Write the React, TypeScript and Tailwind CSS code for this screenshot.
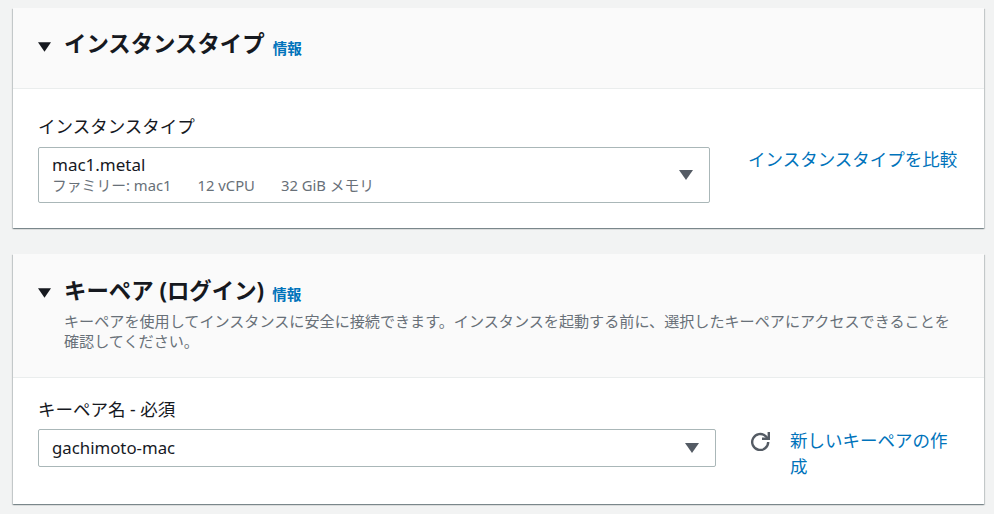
const font = "font-['Noto_Sans','Noto_Sans_CJK_JP',sans-serif]";

function Caret({ className }: { className: string }) {
  return (
    <svg viewBox="0 0 14 10" className={className} fill="currentColor">
      <path d="M0 0H14L7 10Z" />
    </svg>
  );
}

function Info() {
  return <a className="text-[14.6px] font-bold leading-5 text-[#0073bb]">情報</a>;
}

export default function App() {
  return (
    <div className={`${font} h-[514px] w-[994px] overflow-hidden bg-[#f2f3f3] pl-[13px] pr-[10px] pt-2 text-[#16191f]`}>
      {/* インスタンスタイプ */}
      <section className="h-[220px] bg-white shadow-[0_1px_1px_0_rgba(0,28,36,0.3),1px_1px_1px_0_rgba(0,28,36,0.15),-1px_1px_1px_0_rgba(0,28,36,0.15)]">
        <div className="flex h-[81px] items-start border-b border-[#eaeded] bg-[#fafafa] pl-[25px] pt-[19px]">
          <Caret className="mt-[15px] h-[10px] w-[13px] shrink-0 text-[#16191f]" />
          <h2 className="ml-[13px] text-[22.4px] font-bold leading-[34px]">インスタンスタイプ</h2>
          <div className="ml-[8px] mt-[9px]"><Info /></div>
        </div>
        <div className="flex pl-[25px] pr-[26px] pt-[24px]">
          <div className="w-[672px]">
            <div className="text-[17.5px] leading-[26px]">インスタンスタイプ</div>
            <div className="mt-[8px] flex h-[56px] items-center justify-between rounded-[2px] border border-[#aab7b8] pl-[13px] pr-[16px]">
              <div>
                <div className="pt-[1px] text-[17px] leading-[20px]">mac1.metal</div>
                <div className="flex text-[14.8px] leading-[21px] text-[#687078]">
                  <span>ファミリー: mac1</span>
                  <span className="ml-[26px]">12 vCPU</span>
                  <span className="ml-[26px]">32 GiB メモリ</span>
                </div>
              </div>
              <Caret className="h-[10px] w-[14px] text-[#545b64]" />
            </div>
          </div>
          <a className="ml-[38px] mt-[34px] whitespace-nowrap text-[17.5px] leading-[24px] text-[#0073bb]">インスタンスタイプを比較</a>
        </div>
      </section>

      {/* キーペア */}
      <section className="mt-[26px] h-[250px] bg-white shadow-[0_1px_1px_0_rgba(0,28,36,0.3),1px_1px_1px_0_rgba(0,28,36,0.15),-1px_1px_1px_0_rgba(0,28,36,0.15)]">
        <div className="flex h-[124px] items-start border-b border-[#eaeded] bg-[#fafafa] pl-[25px] pt-[20px]">
          <Caret className="mt-[14px] h-[10px] w-[13px] shrink-0 text-[#16191f]" />
          <div className="ml-[13px]">
            <div className="flex items-start">
              <h2 className="text-[22.4px] font-bold leading-[34px]">キーペア (ログイン)</h2>
              <div className="ml-[8px] mt-[8px]"><Info /></div>
            </div>
            <p className="mt-[3px] w-[890px] text-[15.1px] leading-[20px] text-[#687078]">
              キーペアを使用してインスタンスに安全に接続できます。インスタンスを起動する前に、選択したキーペアにアクセスできることを確認してください。
            </p>
          </div>
        </div>
        <div className="flex pl-[25px] pr-[26px] pt-[19px]">
          <div className="w-[678px]">
            <div className="text-[17.5px] leading-[25px]">キーペア名 - 必須</div>
            <div className="mt-[7px] flex h-[38px] items-center justify-between rounded-[2px] border border-[#aab7b8] pl-[13px] pr-[16px]">
              <span className="pb-[1px] text-[16.8px] leading-[20px]">gachimoto-mac</span>
              <Caret className="h-[10px] w-[14px] text-[#545b64]" />
            </div>
          </div>
          <div className="ml-[34px] mt-[30px] flex items-start">
            <svg viewBox="0 0 20 20" className="mt-[4px] h-5 w-5 shrink-0 text-[#545b64]" fill="none" stroke="currentColor" strokeWidth="2.4">
              <path d="M18.2 11a8 8 0 1 1-2.6-5.9L18 7.5" />
              <path d="M18.8 1V7.8H12" />
            </svg>
            <a className="ml-5 w-[166px] text-[17.5px] leading-[26px] text-[#0073bb]">新しいキーペアの作成</a>
          </div>
        </div>
      </section>
    </div>
  );
}
